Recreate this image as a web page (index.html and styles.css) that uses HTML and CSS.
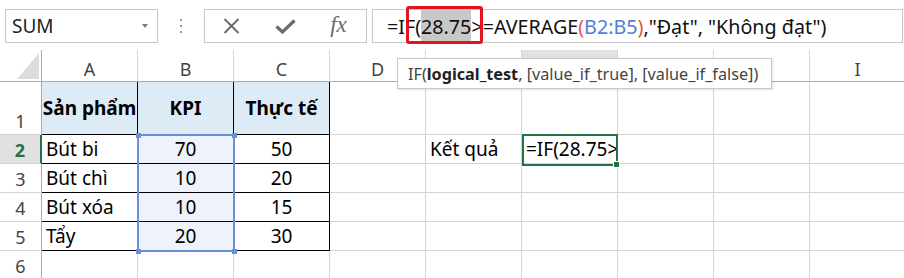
FILE: index.html
```html
<!DOCTYPE html>
<html lang="vi">
<head>
  <meta charset="UTF-8">
  <title>Excel - IF</title>
  <link rel="stylesheet" href="styles.css">
</head>
<body>
  <div class="toolbar">
    <div class="name-box">
      <span class="name">SUM</span>
      <span class="caret"></span>
    </div>
    <div class="grip"><i></i><i></i><i></i></div>
    <div class="fx-buttons">
      <svg class="icon" width="17" height="16" viewBox="0 0 17 16">
        <path d="M1.5 1 L15.5 15 M15.5 1 L1.5 15" stroke="#6b6b6b" stroke-width="2" fill="none"/>
      </svg>
      <svg class="icon" width="21" height="15" viewBox="0 0 21 15">
        <path d="M1.5 7.5 L7.5 13 L19.5 1.5" stroke="#6b6b6b" stroke-width="3.2" fill="none"/>
      </svg>
      <span class="fx">fx</span>
    </div>
    <div class="formula">
      <span class="formula-text">=IF(<span class="sel">28.75</span>&gt;=AVERAGE<span class="paren">(</span><span class="ref">B2:B5</span><span class="paren">)</span>,"Đạt", "Không đạt")</span>
      <div class="mark"></div>
    </div>
  </div>

  <div class="sheet-wrap">
    <div class="sheet" id="sheet">
      <div class="corner"><span class="tri"></span></div>
    </div>
    <div class="overlay">
      <div class="ref-box">
        <i class="h tl"></i><i class="h tr"></i><i class="h bl"></i><i class="h br"></i>
      </div>
      <div class="active-box"><i class="fill-handle"></i></div>
    </div>
    <div class="tooltip">IF(<b>logical_test</b>, [value_if_true], [value_if_false])</div>
  </div>

  <script>
    const sheet = document.getElementById('sheet');
    // E..H headers sit under the function tooltip, so they stay blank
    const cols = ['A', 'B', 'C', 'D', 'E', 'F', 'G', 'H', 'I'];
    const hidden = ['E', 'F', 'G', 'H'];
    const rows = [
      ['Sản phẩm', 'KPI', 'Thực tế'],
      ['Bút bi', '70', '50', '', 'Kết quả', '=IF(28.75>'],
      ['Bút chì', '10', '20'],
      ['Bút xóa', '10', '15'],
      ['Tẩy', '20', '30'],
      []
    ];

    function add(cls, text) {
      const d = document.createElement('div');
      d.className = cls;
      if (text) d.textContent = text;
      sheet.appendChild(d);
      return d;
    }

    cols.forEach(c => add('col-head' + (c === 'F' ? ' active' : ''), hidden.includes(c) ? '' : c));

    rows.forEach((row, r) => {
      add('row-head' + (r === 1 ? ' active' : ''), String(r + 1));
      cols.forEach((c, i) => {
        let cls = 'cell';
        if (r < 5 && i < 3) cls += ' tb';
        if (r === 0 && i < 3) cls += ' th';
        if (r > 0 && (i === 1 || i === 2)) cls += ' num';
        if (i === 1 && r > 0 && r < 5) cls += ' in-ref';
        add(cls, row[i] || '');
      });
    });
  </script>
</body>
</html>
```

FILE: styles.css
```css
:root {
  --grid-line: #d4d4d4;
  --head-line: #ababab;
  --head-text: #444;
  --excel-green: #217346;
  --ref-blue: #6d8fd8;
  --font-cell: 'Noto Sans', 'Open Sans', sans-serif;
}

body {
  margin: 0;
  background: #fff;
  font-family: var(--font-cell);
  overflow: hidden;
  width: 904px;
  height: 278px;
}

/* formula bar */

.toolbar {
  display: flex;
  align-items: flex-start;
  height: 50px;
  padding: 9px 0 0 5px;
  box-sizing: border-box;
}

.name-box {
  width: 153px;
  height: 34px;
  box-sizing: border-box;
  border: 1px solid #c6c6c6;
  display: flex;
  align-items: center;
  justify-content: space-between;
  padding: 0 9px 0 6px;
}

.name {
  font-size: 19px;
  color: #222;
}

.caret {
  width: 0;
  height: 0;
  border-left: 3.5px solid transparent;
  border-right: 3.5px solid transparent;
  border-top: 4px solid #7a7a7a;
}

.grip {
  width: 46px;
  height: 34px;
  display: flex;
  flex-direction: column;
  align-items: center;
  justify-content: center;
  gap: 4px;
}

.grip i {
  display: block;
  width: 2px;
  height: 2px;
  background: #9a9a9a;
}

.fx-buttons {
  width: 163px;
  height: 34px;
  box-sizing: border-box;
  border: 1px solid #c6c6c6;
  display: flex;
  align-items: center;
  justify-content: space-around;
  padding: 0 2px 0 1px;
}

.fx {
  font-family: 'Liberation Serif', serif;
  font-style: italic;
  font-size: 23px;
  color: #6b6b6b;
  margin-top: -3px;
}

.formula {
  position: relative;
  flex: 1;
  height: 34px;
  margin-left: 5px;
  margin-right: 1px;
  box-sizing: border-box;
  border: 1px solid #c6c6c6;
  display: flex;
  align-items: center;
  padding-left: 14px;
  font-size: 19.7px;
  color: #111;
  white-space: nowrap;
}

.sel {
  background: #c8c8c8;
  padding: 3px 0 4px;
}

.paren {
  color: #e0584f;
}

.ref {
  color: #4f7fd6;
}

.mark {
  position: absolute;
  left: 33px;
  top: -4px;
  width: 77px;
  height: 38px;
  box-sizing: border-box;
  border: 3px solid #e3141e;
  border-radius: 3px;
}

/* sheet */

.sheet-wrap {
  position: relative;
}

.sheet,
.overlay {
  display: grid;
  grid-template-columns: 42px repeat(9, 96px);
  grid-template-rows: 32px 53px repeat(5, 29px);
}

.overlay {
  position: absolute;
  inset: 0;
  pointer-events: none;
}

.corner {
  border-right: 1px solid var(--head-line);
  border-bottom: 1px solid var(--head-line);
  display: flex;
  align-items: flex-end;
  justify-content: flex-end;
  padding: 0 2px 2px 0;
}

.tri {
  width: 0;
  height: 0;
  border-left: 22px solid transparent;
  border-bottom: 26px solid #dcdcdc;
}

.col-head {
  border-right: 1px solid var(--grid-line);
  border-bottom: 1px solid var(--head-line);
  display: flex;
  align-items: center;
  justify-content: center;
  padding-top: 7px;
  font-size: 18px;
  color: var(--head-text);
}

.col-head.active {
  background: #e1e1e1;
  border-bottom: 2px solid var(--excel-green);
  color: var(--excel-green);
}

.row-head {
  border-right: 1px solid var(--head-line);
  border-bottom: 1px solid var(--grid-line);
  display: flex;
  align-items: flex-end;
  justify-content: center;
  font-size: 18px;
  color: var(--head-text);
  line-height: 24px;
  padding-bottom: 1px;
}

.row-head.active {
  background: #e1e1e1;
  color: var(--excel-green);
  font-weight: bold;
  border-right: 2px solid var(--excel-green);
}

.cell {
  border-right: 1px solid var(--grid-line);
  border-bottom: 1px solid var(--grid-line);
  display: flex;
  align-items: center;
  padding: 0 4px;
  font-size: 19px;
  color: #000;
  white-space: nowrap;
  overflow: hidden;
}

.cell.tb {
  border-right-color: #000;
  border-bottom-color: #000;
}

.cell.th {
  background: #ddebf7;
  font-weight: bold;
  justify-content: center;
  padding: 0 2px;
}

.cell.num {
  justify-content: center;
}

.cell.in-ref {
  background: #edf2fb;
}

/* selection overlays */

.ref-box {
  grid-column: 3;
  grid-row: 3 / 7;
  margin: -1px -1px -1px -1px;
  border: 2px solid var(--ref-blue);
  position: relative;
}

.h {
  position: absolute;
  width: 5px;
  height: 5px;
  background: var(--ref-blue);
}

.h.tl { left: -3px; top: -3px; }
.h.tr { right: -4px; top: -3px; }
.h.bl { left: -3px; bottom: -4px; }
.h.br { right: -4px; bottom: -4px; }

.active-box {
  grid-column: 7;
  grid-row: 3;
  margin: -1px 0 -2px 0;
  border: 2px solid var(--excel-green);
  position: relative;
}

.fill-handle {
  position: absolute;
  right: -4px;
  bottom: -4px;
  width: 5px;
  height: 5px;
  background: var(--excel-green);
  border: 1px solid #fff;
}

.tooltip {
  position: absolute;
  left: 397px;
  top: 8px;
  width: 375px;
  height: 31px;
  box-sizing: border-box;
  background: #fff;
  border: 1px solid #c8c8c8;
  box-shadow: 1px 1px 2px rgba(0, 0, 0, 0.12);
  padding: 0 0 0 10px;
  display: flex;
  align-items: center;
  font-size: 16.2px;
  color: #444;
  white-space: nowrap;
}

.tooltip b {
  color: #222;
}
```
